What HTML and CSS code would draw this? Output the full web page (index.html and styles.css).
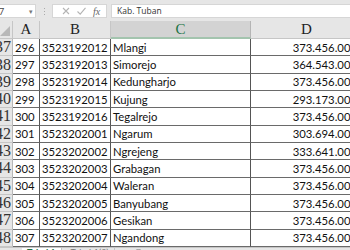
FILE: index.html
```html
<!DOCTYPE html>
<html>
<head>
<meta charset="utf-8">
<link rel="stylesheet" href="styles.css">
</head>
<body>
<div class="app">
  <div class="fbar">
    <div class="namebox"><span class="nb-text">7</span><span class="nb-arrow">&#9662;</span></div>
    <div class="dots"><i></i><i></i><i></i></div>
    <div class="btns">
      <svg class="ic" width="10" height="10" viewBox="0 0 10 10"><path d="M2 2L8 8M8 2L2 8" stroke="#b4b4b4" stroke-width="1.1" fill="none"/></svg>
      <svg class="ic" width="11" height="10" viewBox="0 0 11 10"><path d="M1.5 5.5L4.2 8.2L9.5 1.8" stroke="#b4b4b4" stroke-width="1.1" fill="none"/></svg>
      <span class="fx">fx</span>
    </div>
    <div class="finput">Kab. Tuban</div>
  </div>
  <div class="sheet">
    <div class="corner"></div>
    <div class="ch">A</div>
    <div class="ch">B</div>
    <div class="ch sel">C</div>
    <div class="ch">D</div>

    <div class="rh"><span>37</span></div><div class="c">296</div><div class="c">3523192012</div><div class="c">Mlangi</div><div class="c num">373.456.000</div>
    <div class="rh"><span>38</span></div><div class="c">297</div><div class="c">3523192013</div><div class="c">Simorejo</div><div class="c num">364.543.000</div>
    <div class="rh"><span>39</span></div><div class="c">298</div><div class="c">3523192014</div><div class="c">Kedungharjo</div><div class="c num">373.456.000</div>
    <div class="rh"><span>40</span></div><div class="c">299</div><div class="c">3523192015</div><div class="c">Kujung</div><div class="c num">293.173.000</div>
    <div class="rh"><span>41</span></div><div class="c">300</div><div class="c">3523192016</div><div class="c">Tegalrejo</div><div class="c num">373.456.000</div>
    <div class="rh"><span>42</span></div><div class="c">301</div><div class="c">3523202001</div><div class="c">Ngarum</div><div class="c num">303.694.000</div>
    <div class="rh"><span>43</span></div><div class="c">302</div><div class="c">3523202002</div><div class="c">Ngrejeng</div><div class="c num">333.641.000</div>
    <div class="rh"><span>44</span></div><div class="c">303</div><div class="c">3523202003</div><div class="c">Grabagan</div><div class="c num">373.456.000</div>
    <div class="rh"><span>45</span></div><div class="c">304</div><div class="c">3523202004</div><div class="c">Waleran</div><div class="c num">373.456.000</div>
    <div class="rh"><span>46</span></div><div class="c">305</div><div class="c">3523202005</div><div class="c">Banyubang</div><div class="c num">373.456.000</div>
    <div class="rh"><span>47</span></div><div class="c">306</div><div class="c">3523202006</div><div class="c">Gesikan</div><div class="c num">373.456.000</div>
    <div class="rh"><span>48</span></div><div class="c">307</div><div class="c">3523202007</div><div class="c">Ngandong</div><div class="c num">373.456.000</div>
  </div>
  <div class="tabs">
    <div class="tab active">Tabel 1</div>
    <div class="tab">Tabel 1(2)</div>
    <div class="plus"></div>
  </div>
</div>
</body>
</html>
```

FILE: styles.css
```css
html, body {
  margin: 0;
  padding: 0;
  width: 350px;
  height: 250px;
  overflow: hidden;
  background: #e6e6e6;
}
.app {
  width: 350px;
  height: 250px;
  overflow: hidden;
  display: flex;
  flex-direction: column;
  font-family: Lato, "Open Sans", sans-serif;
}
.fbar {
  height: 21px;
  flex: none;
  display: flex;
  align-items: center;
  background: #e6e6e6;
  box-sizing: border-box;
  padding-top: 1px;
}
.namebox {
  width: 36px;
  height: 14px;
  background: #fff;
  border: 1px solid #d6d6d6;
  border-left: none;
  box-sizing: border-box;
  display: flex;
  align-items: center;
  justify-content: space-between;
  font-size: 9px;
  color: #444;
  padding: 0 2px 0 0;
}
.nb-text { margin-left: -1px; }
.nb-arrow { font-size: 7px; color: #777; }
.dots {
  width: 16px;
  display: flex;
  flex-direction: column;
  align-items: center;
  gap: 2px;
}
.dots i {
  display: block;
  width: 1px;
  height: 1px;
  background: #aaa;
}
.btns {
  width: 55px;
  height: 14px;
  background: #fff;
  border: 1px solid #d6d6d6;
  box-sizing: border-box;
  display: flex;
  align-items: center;
  justify-content: space-around;
  padding: 0 3px 0 5px;
}
.fx {
  font-family: "Liberation Serif", serif;
  font-style: italic;
  font-size: 10px;
  color: #666;
}
.finput {
  flex: 1;
  margin-left: 4px;
  height: 14px;
  background: #fff;
  border: 1px solid #d6d6d6;
  border-right: none;
  box-sizing: border-box;
  font-family: "Open Sans", sans-serif;
  font-size: 8.5px;
  line-height: 12px;
  padding-left: 5px;
  color: #333;
}
.sheet {
  flex: none;
  display: grid;
  grid-template-columns: 13px 27px 71px 140px 112px;
  grid-template-rows: 18px;
  grid-auto-rows: 17.33px;
  width: 363px;
  background: #fff;
}
.corner, .ch, .rh {
  background: #e6e6e6;
  box-sizing: border-box;
}
.corner {
  border-right: 1px solid #c6c6c6;
  border-bottom: 1px solid #c6c6c6;
  position: relative;
  overflow: hidden;
}
.corner::after {
  content: "";
  position: absolute;
  right: 2px;
  bottom: 2px;
  border-left: 10px solid transparent;
  border-bottom: 10px solid #b8b8b8;
}
.ch {
  display: flex;
  align-items: center;
  justify-content: center;
  font-family: "Liberation Serif", serif;
  font-size: 15px;
  color: #222;
  border-right: 1px solid #c6c6c6;
  border-bottom: 1px solid #c6c6c6;
}
.ch.sel {
  background: #d3d3d3;
  color: #217346;
  border-bottom: 2px solid #a3c4ae;
  border-right: 1px solid #b5b5b5;
}
.rh {
  display: flex;
  align-items: center;
  justify-content: flex-end;
  overflow: hidden;
  font-family: "Liberation Serif", serif;
  font-size: 16px;
  color: #333;
  border-right: 1px solid #b8b8b8;
  border-bottom: 1px solid #c6c6c6;
  padding-right: 1px;
}
.rh span { white-space: nowrap; }
.c {
  box-sizing: border-box;
  border-right: 1px solid #555;
  border-bottom: 1px solid #6a6a6a;
  font-size: 11.3px;
  color: #111;
  display: flex;
  align-items: center;
  padding-left: 2px;
  white-space: nowrap;
  overflow: hidden;
}
.c.num {
  justify-content: flex-end;
  padding-left: 0;
  padding-right: 5px;
}
.tabs {
  flex: 1;
  display: flex;
  align-items: flex-start;
  background: #e6e6e6;
  border-top: 1px solid #c6c6c6;
  padding-left: 22px;
  gap: 4px;
}
.tab {
  font-size: 9px;
  line-height: 10px;
  padding: 0 5px;
  color: #777;
  border-right: 1px solid #c6c6c6;
}
.tab.active {
  background: #fff;
  color: #217346;
  font-weight: bold;
}
.plus {
  width: 9px;
  height: 9px;
  border: 1px solid #999;
  border-radius: 50%;
  margin-left: 14px;
  margin-top: 1px;
}
```
